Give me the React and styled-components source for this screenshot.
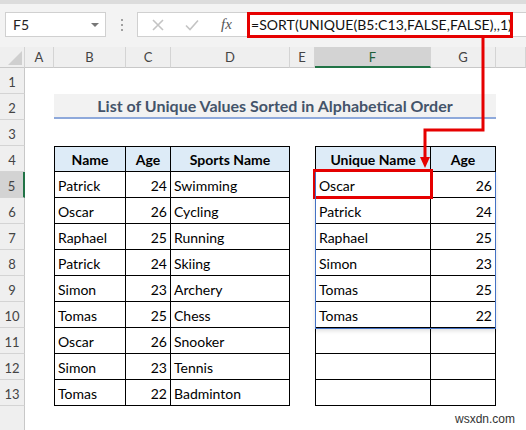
import styled, { createGlobalStyle } from "styled-components";

const GlobalStyle = createGlobalStyle`
  html, body {
    margin: 0;
    padding: 0;
    background: #fff;
  }
  body {
    font-family: Lato, "Noto Sans", sans-serif;
    color: #000;
  }
`;

const COLS = ["A", "B", "C", "D", "E", "F", "G", ""];

const sports = [
  ["Patrick", 24, "Swimming"],
  ["Oscar", 26, "Cycling"],
  ["Raphael", 25, "Running"],
  ["Patrick", 24, "Skiing"],
  ["Simon", 23, "Archery"],
  ["Tomas", 25, "Chess"],
  ["Oscar", 26, "Snooker"],
  ["Simon", 23, "Tennis"],
  ["Tomas", 22, "Badminton"],
];

const unique = [
  ["Oscar", 26],
  ["Patrick", 24],
  ["Raphael", 25],
  ["Simon", 23],
  ["Tomas", 25],
  ["Tomas", 22],
  ["", ""],
  ["", ""],
  ["", ""],
];

// sheet column numbers in the grid (col 1 is the row header)
const COL_B = 3;
const COL_F = 7;

export default function App() {
  return (
    <>
      <GlobalStyle />
      <Page>
        <Toolbar>
          <NameBox>
            <span>F5</span>
            <Caret />
          </NameBox>
          <Dots>
            <i />
            <i />
            <i />
          </Dots>
          <FormulaBox>
            <FxIcons>
              <svg width="14" height="14" viewBox="0 0 14 14">
                <path d="M2 2 L12 12 M12 2 L2 12" stroke="#c4c4c4" strokeWidth="1.6" fill="none" />
              </svg>
              <svg width="16" height="14" viewBox="0 0 16 14">
                <path d="M2 7.5 L6 11.5 L14 2.5" stroke="#c4c4c4" strokeWidth="1.6" fill="none" />
              </svg>
              <Fx>fx</Fx>
            </FxIcons>
            <FormulaText>=SORT(UNIQUE(B5:C13,FALSE,FALSE),,1)</FormulaText>
          </FormulaBox>
        </Toolbar>

        <Sheet>
          <Corner>
            <svg width="14" height="14" viewBox="0 0 14 14">
              <path d="M14 0 L14 14 L0 14 Z" fill="#cfcfcf" />
            </svg>
          </Corner>
          {COLS.map((c, i) => (
            <ColHead key={i} $selected={c === "F"}>
              {c}
            </ColHead>
          ))}
          {Array.from({ length: 14 }, (_, i) => (
            <RowHead key={i} $row={i + 1} $selected={i + 1 === 5}>
              {i < 13 ? i + 1 : ""}
            </RowHead>
          ))}

          <Title>List of Unique Values Sorted in Alphabetical Order</Title>

          {["Name", "Age", "Sports Name"].map((h, i) => (
            <Cell key={h} $row={4} $col={COL_B + i} $head $first={i === 0}>
              {h}
            </Cell>
          ))}
          {sports.map((r, ri) =>
            r.map((v, ci) => (
              <Cell
                key={ri + "-" + ci}
                $row={5 + ri}
                $col={COL_B + ci}
                $first={ci === 0}
                $right={ci === 1}
              >
                {v}
              </Cell>
            ))
          )}

          {["Unique Name", "Age"].map((h, i) => (
            <Cell key={h} $row={4} $col={COL_F + i} $head $first={i === 0}>
              {h}
            </Cell>
          ))}
          {unique.map((r, ri) =>
            r.map((v, ci) => (
              <Cell
                key={"u" + ri + "-" + ci}
                $row={5 + ri}
                $col={COL_F + ci}
                $first={ci === 0}
                $right={ci === 1}
              >
                {v}
              </Cell>
            ))
          )}
          <Spill />
        </Sheet>

        <Overlay width="526" height="430" viewBox="0 0 526 430">
          <rect x="248.5" y="13.5" width="263" height="23" fill="none" stroke="#e60000" strokeWidth="3" />
          <rect x="314.5" y="170.5" width="117" height="27" fill="none" stroke="#e60000" strokeWidth="3" />
          <path d="M483 38 L483 130 L425 130 L425 159" fill="none" stroke="#e60000" strokeWidth="3" />
          <path d="M420 157 L430 157 L425 168 Z" fill="#e60000" />
        </Overlay>

        <Watermark>wsxdn.com</Watermark>
      </Page>
    </>
  );
}

const Page = styled.div`
  position: relative;
  width: 526px;
  height: 430px;
  overflow: hidden;
`;

const Toolbar = styled.div`
  height: 47px;
  box-sizing: border-box;
  background: #f3f3f3;
  border-top: 4px solid #dcdcdc;
  display: flex;
  align-items: flex-start;
  padding: 8px 0 0 5px;
`;

const NameBox = styled.div`
  width: 101px;
  height: 25px;
  box-sizing: border-box;
  background: #fff;
  border: 1px solid #d0d0d0;
  display: flex;
  align-items: center;
  justify-content: space-between;
  padding: 0 6px 0 7px;
  font-size: 14px;
  color: #222;
`;

const Caret = styled.span`
  width: 0;
  height: 0;
  border-left: 4px solid transparent;
  border-right: 4px solid transparent;
  border-top: 4px solid #777;
`;

const Dots = styled.div`
  width: 31px;
  height: 25px;
  display: flex;
  flex-direction: column;
  align-items: center;
  justify-content: center;
  gap: 3px;

  i {
    display: block;
    width: 2px;
    height: 2px;
    background: #a0a0a0;
  }
`;

const FormulaBox = styled.div`
  flex: 1;
  height: 25px;
  box-sizing: border-box;
  background: #fff;
  border: 1px solid #d0d0d0;
  border-right: none;
  display: flex;
  align-items: center;
`;

const FxIcons = styled.div`
  display: flex;
  align-items: center;
  gap: 19px;
  padding-left: 13px;
  width: 112px;
  box-sizing: border-box;
`;

const Fx = styled.span`
  font-family: "Liberation Serif", serif;
  font-style: italic;
  font-size: 15px;
  color: #555;
  margin-left: 2px;
`;

const FormulaText = styled.div`
  font-size: 14px;
  color: #111;
  white-space: nowrap;
  padding-left: 1px;
  letter-spacing: 0.05px;
`;

const Sheet = styled.div`
  position: relative;
  display: grid;
  grid-template-columns: 25px 29px 72px 45px 119px 25px 116px 65px 1fr;
  grid-template-rows: 21px repeat(14, 26px);
`;

const Corner = styled.div`
  grid-row: 1;
  grid-column: 1;
  background: #efefef;
  border-right: 1px solid #d4d4d4;
  border-bottom: 1px solid #c8c8c8;
  display: flex;
  align-items: flex-end;
  justify-content: flex-end;
  padding: 0 2px 2px 0;
`;

const ColHead = styled.div`
  grid-row: 1;
  background: ${(p) => (p.$selected ? "#d3d3d3" : "#efefef")};
  border-right: 1px solid #d4d4d4;
  border-bottom: ${(p) => (p.$selected ? "2px solid #217346" : "1px solid #c8c8c8")};
  display: flex;
  align-items: center;
  justify-content: center;
  font-size: 13px;
  color: ${(p) => (p.$selected ? "#1e5e3a" : "#444")};
`;

const RowHead = styled.div`
  grid-column: 1;
  grid-row: ${(p) => p.$row + 1};
  background: ${(p) => (p.$selected ? "#d3d3d3" : "#efefef")};
  border-bottom: 1px solid #d4d4d4;
  border-right: ${(p) => (p.$selected ? "2px solid #217346" : "1px solid #c8c8c8")};
  display: flex;
  align-items: flex-end;
  justify-content: center;
  padding-bottom: 3px;
  box-sizing: border-box;
  font-size: 13px;
  color: #444;
`;

const Title = styled.div`
  grid-row: 3;
  grid-column: 3 / 9;
  background: #f2f2f2;
  border-bottom: 2px solid #8ea9db;
  margin-bottom: 1px;
  display: flex;
  align-items: center;
  justify-content: center;
  font-weight: 700;
  font-size: 16px;
  color: #44546a;
`;

const Cell = styled.div`
  grid-row: ${(p) => p.$row + 1};
  grid-column: ${(p) => p.$col};
  box-sizing: border-box;
  border-right: 1px solid #000;
  border-bottom: 1px solid #000;
  border-top: ${(p) => (p.$row === 4 ? "1px solid #000" : "none")};
  border-left: ${(p) => (p.$first ? "1px solid #000" : "none")};
  background: ${(p) => (p.$head ? "#ddebf7" : "#fff")};
  font-weight: ${(p) => (p.$head ? 700 : 400)};
  font-size: 14px;
  display: flex;
  align-items: flex-end;
  padding: 0 3px 3px;
  justify-content: ${(p) => (p.$head ? "center" : p.$right ? "flex-end" : "flex-start")};
  white-space: nowrap;
`;

const Spill = styled.div`
  grid-row: 6 / 12;
  grid-column: 7 / 9;
  border: 1px solid #4472c4;
  border-top: none;
  margin-bottom: -1px;
  box-shadow: 0 2px 4px rgba(0, 0, 0, 0.12);
  pointer-events: none;
  z-index: 1;
`;

const Watermark = styled.div`
  position: absolute;
  right: 11px;
  bottom: 4px;
  font-family: "Liberation Sans", Arial, sans-serif;
  font-size: 12px;
  color: #333;
`;

const Overlay = styled.svg`
  position: absolute;
  left: 0;
  top: 0;
  pointer-events: none;
`;
